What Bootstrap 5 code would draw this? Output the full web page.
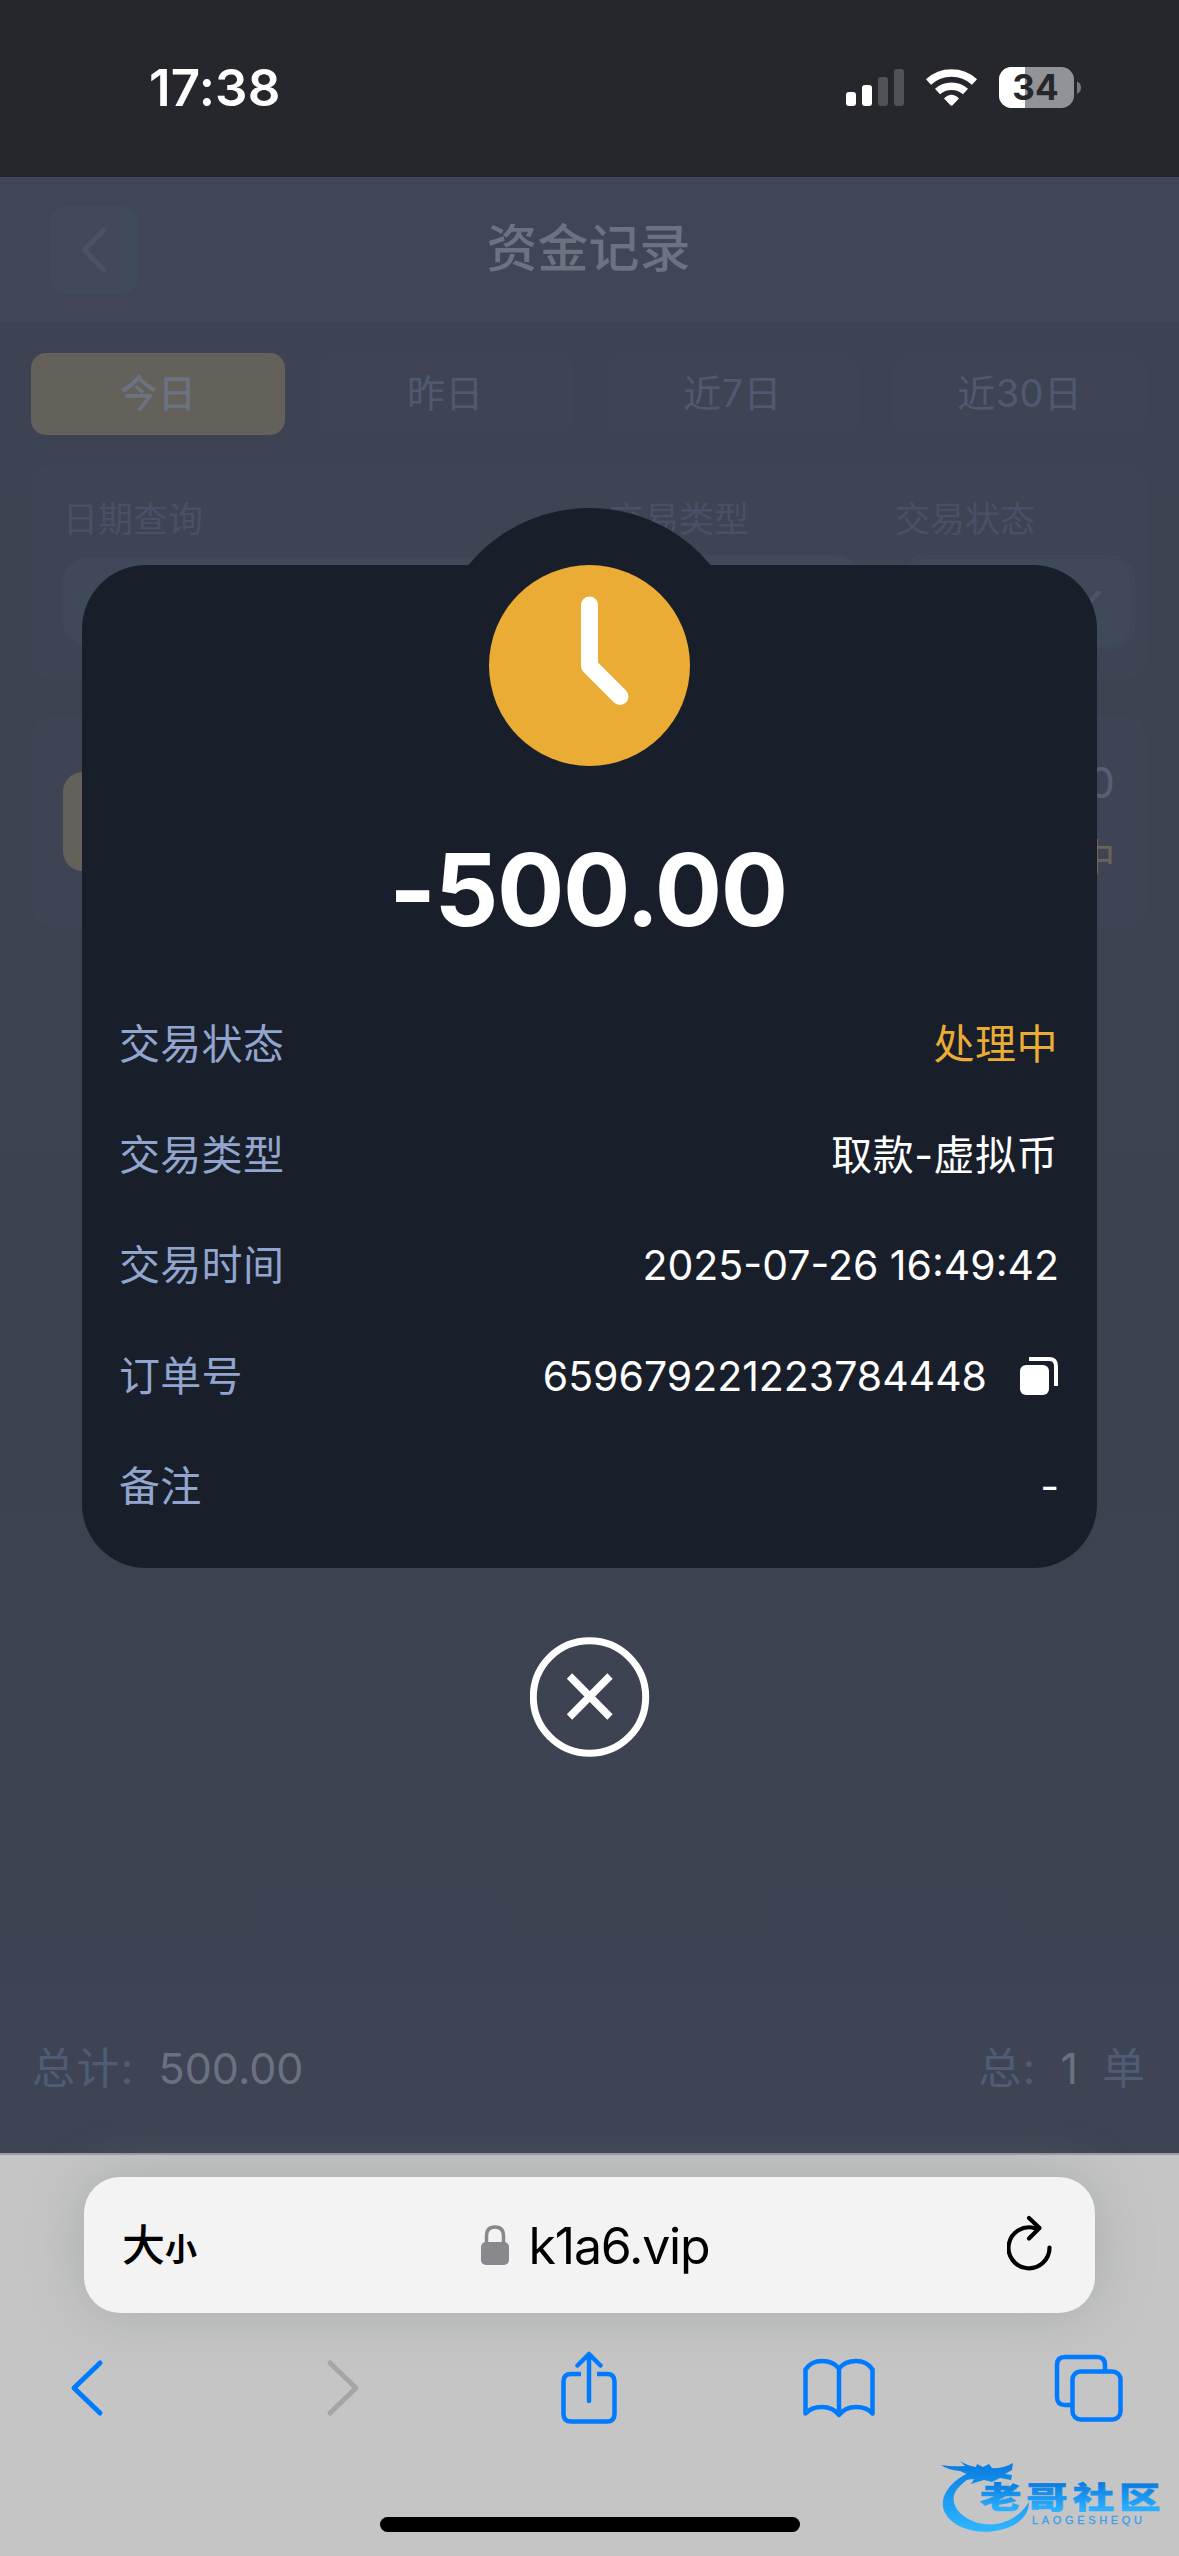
<!DOCTYPE html>
<html lang="zh-CN">
<head>
<meta charset="utf-8">
<meta name="viewport" content="width=device-width, initial-scale=1">
<title>资金记录</title>
<link href="https://cdn.jsdelivr.net/npm/bootstrap@5.3.0/dist/css/bootstrap.min.css" rel="stylesheet">
<style>
body{width:1179px;height:2556px;overflow:hidden;background:#3d4352;font-family:Inter,"Noto Sans CJK SC",sans-serif;color:#fff}
svg{display:block}
.statusbar{height:177px;background:#26272c;padding:0 97px 0 149px}
.clock-time{font-size:51px;font-weight:600;line-height:60px;letter-spacing:.2px;padding-bottom:1px}
.page-area{height:1976px;background:linear-gradient(#3d4352,#3d4251 60%,#3d4352)}
.page-head{height:145px;background:#404658;padding:0 50px;margin-bottom:31px}
.back-btn{width:88px;height:88px;border-radius:18px;background:#404a5a}
.page-title{font-size:51px;font-weight:500;line-height:60px;color:#6b7280;padding:0 2px 2px 0}
.tabs-row{gap:33px;padding:0 32px 0 31px;height:82px;margin-bottom:31px}
.tab-item{border-radius:15px;background:#3e4453;color:#4f5a70;font-size:38px;line-height:80px;letter-spacing:.4px}
.tab-item.on{background:#64605a;color:#6b7282;font-weight:500}
.panel{margin:0 32px 0 31px;height:212px;background:#3f4454;border-radius:16px}
.filters{padding:29px 12px 0 32px;margin-bottom:38px}
.f-label{font-size:35px;line-height:48px;color:#485166;margin-bottom:12px}
.f-box{height:94px;background:#404959;border-radius:24px}
.f-date{width:498px}.f-type{width:257px}.f-state{width:235px}
.f-date .f-box{height:87px;margin-top:15px}
.f-state .f-box{border:3px solid #3f4758;box-shadow:inset 0 0 0 1px #3e4554}
.f-type .f-label{padding-left:7px}
.f-state .f-label{margin-left:-5px}
.record{padding:38px 32px 0 32px;border-radius:22px}
.rec-icon{width:99px;height:99px;border-radius:20px;background:#64605a;margin-top:18px}
.rec-num{font-size:43px;line-height:56px;color:#566075}
.rec-st{font-size:37px;line-height:56px;color:#6b6459;margin-top:20px}
.totals{height:170px;background:#3e4454;padding:0 34px 0 32px;font-size:43px;line-height:60px;color:#4f5c75}
.totals .tk{letter-spacing:1.4px}
.totals b{font-weight:400;color:#6b7180}
.safari{height:403px;background:#c5c5c6;border-top:2px solid #9b9ca2;padding-top:22px}
.urlbar{width:1011px;height:136px;margin:0 84px;border-radius:36px;background:#f3f3f3;color:#000;padding:0 42px 0 38px;box-shadow:0 0 55px rgba(130,138,132,.42)}
.url-text{font-size:50px;line-height:60px;letter-spacing:-1.2px;padding-top:1px}
.url-mid{padding-right:14px}
.url-mid svg{margin-right:20px}
.size-big{font-size:43px;font-weight:500}.size-small{font-size:32px;font-weight:700}
.tools{height:76px;margin-top:37px;padding:0 55px 0 68px}
.g1{margin-right:222px}.g2{margin-right:198px}.g3{margin-right:185px}
.homebar{width:420px;height:15px;border-radius:8px;background:#000;margin:91px auto 0}
.sheet-wrap{left:82px;top:508px;width:1015px}
.sheet-top{height:57px}
.bump{width:315px;height:315px;border-radius:50%;background:#191f2a;left:350px;top:0}
.sheet{height:1003px;border-radius:64px;background:#191f2a;padding:0 38px 0 37px}
.amount{font-size:100px;font-weight:700;line-height:120px;margin:64px 2px 39.5px 0;letter-spacing:-1.5px}
.line{height:110.5px;font-size:41px}
.line .k{color:#92a5ce;letter-spacing:.3px}
.line .warn{color:#eaac35}
.line .cj{letter-spacing:.5px;margin-right:1px}
.closer{margin:69px auto 0}
.brand{left:935px;top:2452px}
</style>
</head>
<body class="position-relative d-flex flex-column">
<header class="statusbar d-flex align-items-center">
  <div class="clock-time me-auto">17:38</div>
  <svg width="236" height="46" viewBox="846 66 236 46">
    <g fill="#fff"><rect x="846" y="92" width="10" height="14" rx="3"/><rect x="862" y="85" width="10" height="21" rx="3"/></g>
    <g fill="#515256"><rect x="878" y="77" width="10" height="29" rx="3"/><rect x="894" y="69" width="10" height="37" rx="3"/></g>
    <g fill="none" stroke="#fff"><path d="M928.500 82A34 34 0 0 1 974.500 82" stroke-width="7.500"/><path d="M937.500 91.500A21 21 0 0 1 965.500 91.500" stroke-width="7.500"/></g>
    <path d="M944 98.500Q951.500 91 959 98.500L953 104.800Q951.500 106.500 950 104.800Z" fill="#fff"/>
    <clipPath id="bat"><rect x="999" y="67" width="75" height="41" rx="12.500"/></clipPath>
    <g clip-path="url(#bat)"><rect x="999" y="67" width="75" height="41" fill="#929397"/><rect x="999" y="67" width="26" height="41" fill="#fff"/></g>
    <path d="M1077 81.500Q1081 83 1081 87.500T1077 94Z" fill="#77787c"/>
    <text x="1035.500" y="100" text-anchor="middle" font-family="Inter,sans-serif" font-size="35" font-weight="700" fill="#26272c">34</text>
  </svg>
</header>

<main class="page-area d-flex flex-column flex-shrink-0">
  <div class="page-head d-flex align-items-center justify-content-between flex-shrink-0">
    <div class="back-btn d-flex align-items-center justify-content-center"><svg width="30" height="46" viewBox="0 0 30 46"><path d="M25 3L5 23L25 43" fill="none" stroke="#4a5364" stroke-width="5" stroke-linecap="round" stroke-linejoin="round"/></svg></div>
    <div class="page-title">资金记录</div>
    <div style="width:88px"></div>
  </div>
  <div class="tabs-row d-flex flex-shrink-0 text-center">
    <div class="tab-item on flex-fill w-25">今日</div>
    <div class="tab-item flex-fill w-25">昨日</div>
    <div class="tab-item flex-fill w-25">近7日</div>
    <div class="tab-item flex-fill w-25">近30日</div>
  </div>
  <section class="panel filters d-flex justify-content-between flex-shrink-0">
    <div class="f-date"><div class="f-label">日期查询</div><div class="f-box"></div></div>
    <div class="f-type"><div class="f-label">交易类型</div><div class="f-box"></div></div>
    <div class="f-state"><div class="f-label">交易状态</div><div class="f-box d-flex align-items-center justify-content-end"><svg class="me-4" width="34" height="22" viewBox="-8 2 34 22"><path d="M-5 3L6 15L17 3" fill="none" stroke="#4a5466" stroke-width="5" stroke-linecap="round"/></svg></div></div>
  </section>
  <section class="panel record d-flex justify-content-between flex-shrink-0">
    <div class="rec-icon"></div>
    <div class="text-end"><div class="rec-num">-500.00</div><div class="rec-st">处理中</div></div>
  </section>
  <div class="totals d-flex justify-content-between align-items-center mt-auto flex-shrink-0">
    <div class="d-flex"><span class="tk">总计:</span><b class="ms-4">500.00</b></div>
    <div class="d-flex"><span class="tk">总:</span><b class="ms-4 me-4">1</b><span>单</span></div>
  </div>
</main>

<footer class="safari flex-shrink-0">
  <div class="urlbar d-flex align-items-center justify-content-between">
    <div class="text-nowrap"><span class="size-big">大</span><span class="size-small">小</span></div>
    <div class="url-mid d-flex align-items-center">
      <svg width="28" height="40" viewBox="0 0 28 40"><path d="M5.500 18V11Q5.500 2 14 2T22.500 11V18" fill="none" stroke="#89888d" stroke-width="3.500"/><rect x="0" y="17" width="28" height="23" rx="5" fill="#89888d"/></svg>
      <span class="url-text">k1a6.vip</span>
    </div>
    <svg class="mb-1" width="46" height="56" viewBox="0 0 46 56"><path d="M28 13.200A20.500 20.500 0 1 0 42.500 32.500" fill="none" stroke="#000" stroke-width="4.200" stroke-linecap="round"/><path d="M22 3L32.500 13L22 23.500" fill="none" stroke="#000" stroke-width="4.200" stroke-linecap="round" stroke-linejoin="round"/></svg>
  </div>
  <nav class="tools d-flex align-items-center">
    <svg class="g1" width="36" height="60" viewBox="0 0 36 60"><path d="M32 5L6 30L32 55" fill="none" stroke="#007aff" stroke-width="5" stroke-linecap="round" stroke-linejoin="round"/></svg>
    <svg class="g2" width="36" height="60" viewBox="0 0 36 60"><path d="M4 5L30 30L4 55" fill="none" stroke="#a6a6a6" stroke-width="5" stroke-linecap="round" stroke-linejoin="round"/></svg>
    <svg class="g3" width="58" height="74" viewBox="0 0 58 74"><g fill="none" stroke="#007aff" stroke-width="4.500" stroke-linecap="round" stroke-linejoin="round"><path d="M21 23H11Q3.500 23 3.500 30.500V63Q3.500 70.500 11 70.500H47Q54.500 70.500 54.500 63V30.500Q54.500 23 47 23H37" stroke-linecap="butt"/><path d="M29 50V4M17.500 14.500L29 3L40.500 14.500"/></g></svg>
    <svg class="me-auto" width="72" height="62" viewBox="0 0 72 62"><path d="M36 11.500Q30 4 19 4T2.500 12.500V56.500Q8 50 19 50T36 58Q42 50 53 50T69.500 56.500V12.500Q64 4 53 4T36 11.500V58" fill="none" stroke="#007aff" stroke-width="4.500" stroke-linejoin="round"/></svg>
    <svg width="70" height="68" viewBox="0 0 70 68"><g fill="none" stroke="#007aff" stroke-width="4.500"><path d="M17 51H11Q3 51 3 43V11Q3 3 11 3H43Q51 3 51 11V17"/><rect x="18.500" y="17.500" width="48" height="48" rx="8"/></g></svg>
  </nav>
  <div class="homebar"></div>
</footer>

<div class="sheet-wrap position-absolute">
  <div class="bump position-absolute"></div>
  <div class="sheet-top"></div>
  <div class="sheet position-relative">
    <svg class="mx-auto" width="201" height="201" viewBox="0 0 201 201"><circle cx="100.500" cy="100.500" r="100.500" fill="#eaac35"/><path d="M100.500 40V101L131 131.500" fill="none" stroke="#fff" stroke-width="17" stroke-linecap="round" stroke-linejoin="round"/></svg>
    <div class="amount text-center">-500.00</div>
    <div class="line d-flex align-items-center justify-content-between"><span class="k">交易状态</span><span class="warn cj">处理中</span></div>
    <div class="line d-flex align-items-center justify-content-between"><span class="k">交易类型</span><span class="cj">取款-虚拟币</span></div>
    <div class="line d-flex align-items-center justify-content-between"><span class="k">交易时间</span><span>2025-07-26 16:49:42</span></div>
    <div class="line d-flex align-items-center justify-content-between"><span class="k">订单号</span>
      <span class="d-flex align-items-center">659679221223784448
        <svg class="ms-4" width="48" height="40" viewBox="-9 0 48 40"><rect x="0" y="9" width="29" height="30" rx="6" fill="#fff"/><path d="M9 3H29Q36 3 36 10V30" fill="none" stroke="#fff" stroke-width="4"/></svg>
      </span></div>
    <div class="line d-flex align-items-center justify-content-between"><span class="k">备注</span><span>-</span></div>
  </div>
  <svg class="closer" width="120" height="120" viewBox="0.500 0 120 120"><circle cx="60" cy="60" r="56.200" fill="none" stroke="#fff" stroke-width="7"/><path d="M40 39L80.500 80M80.500 39L40 80" stroke="#fff" stroke-width="7.500"/></svg>
</div>

<svg class="brand position-absolute" width="235" height="84" viewBox="935 2452 235 84">
  <defs><linearGradient id="wm" gradientUnits="userSpaceOnUse" x1="0" y1="2462" x2="0" y2="2528"><stop offset="0" stop-color="#087be0"/><stop offset="1" stop-color="#2cb4ff"/></linearGradient>
  <linearGradient id="wt" x1="0" y1="0" x2="0" y2="1"><stop offset=".2" stop-color="#0878de"/><stop offset=".85" stop-color="#2ab0ff"/></linearGradient></defs>
  <g fill="url(#wm)">
    <path d="M970 2472C948 2482 938 2499 945 2513C956 2533 991 2537 1014 2525C1024 2519 1029 2512 1029 2502C1018 2520 998 2528 978 2523C956 2517 946 2498 960 2486Q967 2478 978 2476Z"/>
    <path d="M941 2465Q952 2467 965 2466L960 2461Q968 2466 976 2467L977 2464L983 2467L989 2464L992 2468Q1003 2469 1013 2463L1012 2470L1005 2474L1012 2475L1011 2480L1000 2478L992 2482L984 2480L971 2484L974 2479L964 2480L969 2475L960 2471Q948 2470 941 2465Z"/>
  </g>
  <text transform="translate(980 2507.500) scale(1.38 1)" font-family="'Noto Sans CJK SC',sans-serif" font-weight="900" font-size="30" letter-spacing="3.600" fill="url(#wt)" stroke="url(#wt)" stroke-width=".6">老哥社区</text>
  <text x="1032" y="2524" font-family="'Liberation Sans',sans-serif" font-size="11" textLength="110" fill="#3b9ee8" stroke="#3b9ee8" stroke-width=".3">LAOGESHEQU</text>
</svg>
<script src="https://cdn.jsdelivr.net/npm/bootstrap@5.3.0/dist/js/bootstrap.bundle.min.js"></script>
</body>
</html>
